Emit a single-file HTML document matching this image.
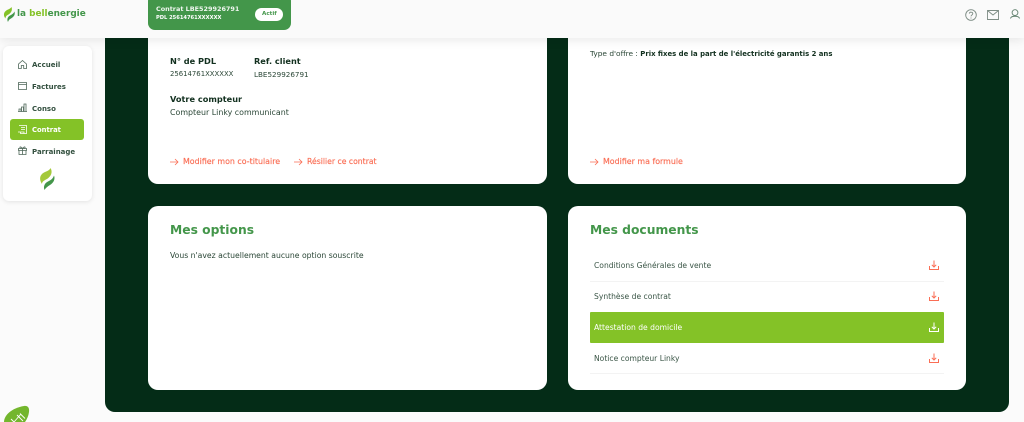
<!DOCTYPE html>
<html lang="fr"><head><meta charset="utf-8"><title>Contrat</title>
<style>
*{box-sizing:border-box;margin:0;padding:0}
html,body{width:1024px;height:422px;overflow:hidden;background:#fbfbfb;font-family:"DejaVu Sans","Liberation Sans",sans-serif;color:#1d3a2a}
.a{position:absolute;white-space:nowrap}
svg{position:absolute;overflow:visible}
#panel{position:absolute;left:105px;top:20px;width:904px;height:392px;background:#042c17;border-radius:10px}
.card{position:absolute;background:#fff;border-radius:10px}
#head{position:absolute;left:0;top:0;width:1024px;height:38px;background:#fafafa;box-shadow:0 2px 10px rgba(0,0,0,.09)}
#pill{position:absolute;left:148px;top:-6px;width:143px;height:36px;background:#43964a;border-radius:7px}
#side{position:absolute;left:3px;top:46px;width:89px;height:155px;background:#fff;border-radius:6px;box-shadow:0 1px 5px rgba(0,0,0,.1)}
.nav{font-size:7px;font-weight:700;color:#33503f;left:32px}
.b{font-size:8.2px;font-weight:700;color:#12301f}
.t{font-size:7.7px;color:#2a4636}
.r{font-size:7.9px;color:#fa6e55;-webkit-text-stroke:.15px #fa6e55}
h2{position:absolute;font-size:12.3px;font-weight:700;color:#43964a;white-space:nowrap}
.doc{font-size:7.6px;color:#3a5546;left:594px}
.line{position:absolute;left:590px;width:354px;height:1px;background:#f3f3f3}
</style></head><body>
<div id="panel"></div>
<div class="card" style="left:148px;top:20px;width:399px;height:164px"></div>
<div class="card" style="left:568px;top:20px;width:398px;height:164px"></div>
<div class="card" style="left:148px;top:206px;width:399px;height:184px"></div>
<div class="card" style="left:568px;top:206px;width:398px;height:184px"></div>

<div class="a b" style="left:170px;top:56px">N° de PDL</div>
<div class="a b" style="left:254px;top:56px">Ref. client</div>
<div class="a t" style="left:170px;top:70px;font-size:6.9px">25614761XXXXXX</div>
<div class="a t" style="left:254px;top:70px;font-size:7.2px">LBE529926791</div>
<div class="a b" style="left:170px;top:94px">Votre compteur</div>
<div class="a t" style="left:170px;top:108px;font-size:7.9px">Compteur Linky communicant</div>
<svg style="left:170px;top:158px" width="9" height="8" fill="none" stroke="#fa6e55" stroke-width=".8"><path d="M0 4H8M5 1L8 4L5 7"/></svg>
<div class="a r" style="left:183px;top:157px">Modifier mon co-titulaire</div>
<svg style="left:294px;top:158px" width="9" height="8" fill="none" stroke="#fa6e55" stroke-width=".8"><path d="M0 4H8M5 1L8 4L5 7"/></svg>
<div class="a r" style="left:307px;top:157px;font-size:7.7px">Résilier ce contrat</div>

<div class="a t" style="left:590px;top:49px;font-size:7.4px">Type d'offre : <b style="color:#12301f;font-size:6.9px">Prix fixes de la part de l'électricité garantis 2 ans</b></div>
<svg style="left:590px;top:158px" width="9" height="8" fill="none" stroke="#fa6e55" stroke-width=".8"><path d="M0 4H8M5 1L8 4L5 7"/></svg>
<div class="a r" style="left:603px;top:157px">Modifier ma formule</div>

<h2 style="left:170px;top:223px">Mes options</h2>
<div class="a t" style="left:170px;top:251px">Vous n'avez actuellement aucune option souscrite</div>

<h2 style="left:590px;top:223px">Mes documents</h2>
<div class="a doc" style="top:261px">Conditions Générales de vente</div>
<div class="line" style="top:281px"></div>
<div class="a doc" style="top:292px">Synthèse de contrat</div>
<div style="position:absolute;left:590px;top:312px;width:354px;height:31px;background:#84c227;border-radius:1px"></div>
<div class="a doc" style="top:323px;color:#fff">Attestation de domicile</div>
<div class="a doc" style="top:354px">Notice compteur Linky</div>
<div class="line" style="top:373px"></div>
<svg style="left:929px;top:260px" width="10" height="10" fill="none" stroke="#fa6e55" stroke-width="1"><path d="M.5 6V9.500H9.500V6M5 .5V7M2.800 4.800L5 7L7.200 4.800"/></svg>
<svg style="left:929px;top:291px" width="10" height="10" fill="none" stroke="#fa6e55" stroke-width="1"><path d="M.5 6V9.500H9.500V6M5 .5V7M2.800 4.800L5 7L7.200 4.800"/></svg>
<svg style="left:929px;top:322px" width="10" height="10" fill="none" stroke="#fff" stroke-width="1"><path d="M.5 6V9.500H9.500V6M5 .5V7M2.800 4.800L5 7L7.200 4.800"/></svg>
<svg style="left:929px;top:353px" width="10" height="10" fill="none" stroke="#fa6e55" stroke-width="1"><path d="M.5 6V9.500H9.500V6M5 .5V7M2.800 4.800L5 7L7.200 4.800"/></svg>

<div id="head"></div>
<svg style="left:4px;top:7px" width="11" height="15"><path d="M7.500 0C8.500 3 7.500 5.500 4.500 7.500C2.500 8.500 1.500 9.500 1.500 11.500C-1 8.500 -.5 5 3 3C5 2 6.500 1.500 7.500 0Z" fill="#84c227"/><path d="M10.500 4.500C11.500 8 9.500 10 7 11.500C5 12.500 4.500 13.500 4 15C2.500 12 4 9.500 6 8.500C8 7.500 9.500 6.500 10.500 4.500Z" fill="#43964a"/></svg>
<div class="a" style="left:17px;top:9px;font-size:8.9px;font-weight:700;color:#43964a;line-height:11px">la <span style="color:#84c227">bell</span>energie</div>
<div id="pill"></div>
<div class="a" style="left:156px;top:5px;font-size:6.45px;font-weight:700;color:#fff;opacity:.92">Contrat LBE529926791</div>
<div class="a" style="left:156px;top:15px;font-size:5.15px;font-weight:700;color:#fff">PDL 25614761XXXXXX</div>
<div style="position:absolute;left:255px;top:8px;width:28px;height:13px;background:#fff;border-radius:7px"></div>
<div class="a" style="left:262px;top:11px;font-size:5.6px;font-weight:700;color:#43964a">Actif</div>
<svg style="left:965px;top:9px" width="12" height="12" fill="none" stroke="#7d8c84" stroke-width=".9"><circle cx="6" cy="6" r="5.300"/><path d="M4.300 4.600C4.300 2.600 7.800 2.700 7.800 4.600C7.800 6 6 6 6 7.400M6 8.500V9.500"/></svg>
<svg style="left:987px;top:10px" width="12" height="10" fill="none" stroke="#7d8c84" stroke-width=".9"><path d="M.5 .5H11.500V9.500H.5ZM.5 .5L6 5L11.500 .5"/></svg>
<svg style="left:1010px;top:9px" width="10" height="11" fill="none" stroke="#5f7f6c" stroke-width=".9"><circle cx="5" cy="3.600" r="2.900"/><path d="M.5 9.500C1 6.500 9 6.500 9.500 9.500"/></svg>

<div id="side"></div>
<svg style="left:18px;top:60px" width="9" height="9" fill="none" stroke="#4d6658" stroke-width=".8"><path d="M.5 4L4.500 .5L8.500 4V8.500H5.700V5.500H3.300V8.500H.5Z"/></svg>
<div class="a nav" style="top:60px;line-height:10px">Accueil</div>
<svg style="left:18px;top:82px" width="9" height="8" fill="none" stroke="#4d6658" stroke-width=".8"><path d="M.5 .5H8.500V7.500H.5ZM.5 2.500H8.500"/></svg>
<div class="a nav" style="top:82px;line-height:10px">Factures</div>
<svg style="left:18px;top:103px" width="9" height="9" fill="none" stroke="#4d6658" stroke-width=".8"><path d="M0 8.500H9M1 8.500V6H3V8.500M3.500 8.500V4H5.500V8.500M6 8.500V1H8V8.500"/></svg>
<div class="a nav" style="top:104px;line-height:10px">Conso</div>
<div style="position:absolute;left:10px;top:119px;width:74px;height:21px;background:#84c227;border-radius:3px"></div>
<svg style="left:18px;top:125px" width="9" height="9" fill="none" stroke="#fff" stroke-width=".8"><path d="M1 .5H8.500V8.500H2.500V7M0 7H6V8.500M3 2.500H7M3 4.500H7"/></svg>
<div class="a nav" style="top:125px;color:#fff;font-size:6.8px;line-height:10px">Contrat</div>
<svg style="left:18px;top:146px" width="9" height="9" fill="none" stroke="#4d6658" stroke-width=".8"><path d="M.5 2.500H8.500V4.500H.5ZM1 4.500V8.500H8V4.500M4.500 2.500V8.500M4.500 2.500C3 .5 1.500 .5 2 1.800C2.300 2.500 4.500 2.500 4.500 2.500C6 .5 7.500 .5 7 1.800C6.700 2.500 4.500 2.500 4.500 2.500"/></svg>
<div class="a nav" style="top:147px;line-height:10px">Parrainage</div>
<svg style="left:40px;top:168px" width="15" height="22"><path d="M10.500 0C13 4 11 8.500 7 11C4 12.500 2 13.500 2 16C-1 11.500 -.5 7 4 4.500C7 3 9.500 2.500 10.500 0Z" fill="#a4c93a"/><path d="M14 7.500C15.500 11 13.500 15 10 17C7.500 18.500 5.500 20 4.500 22C3 18 5 15 8 13.500C11 12 13 10.500 14 7.500Z" fill="#43964a"/></svg>

<svg style="left:3px;top:406px" width="27" height="16"><path d="M1 16C1 9 9 2 21 0C25 -.5 26.500 2 26 6C25.500 10 24 13 22 16Z" fill="#73b62d"/><path d="M8 13L11 16M11 16L18 8M14 9L20 15M17 7.500L22 12.500" stroke="#fff" stroke-width=".9" fill="none"/></svg>
</body></html>
